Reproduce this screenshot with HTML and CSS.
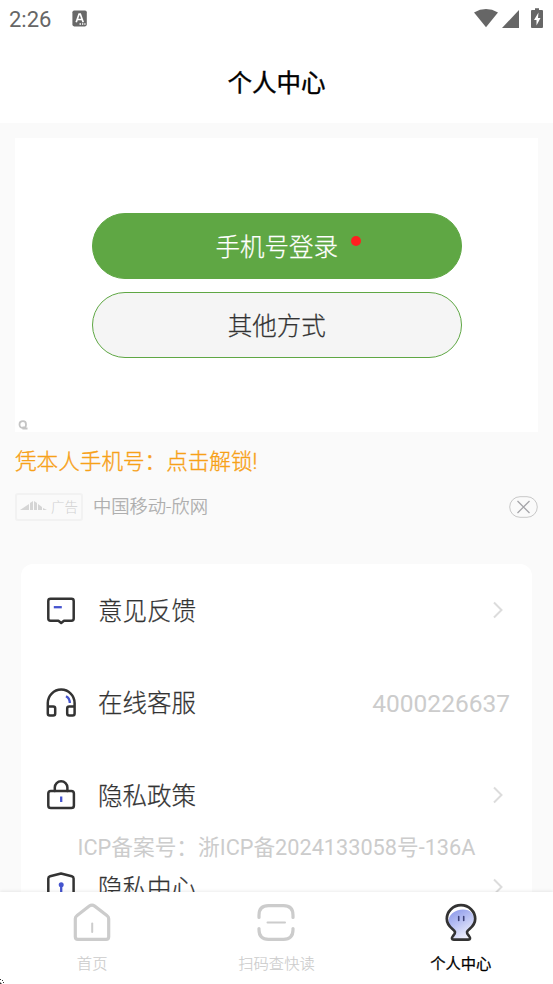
FILE: index.html
```html
<!DOCTYPE html>
<html lang="zh-CN">
<head>
<meta charset="UTF-8">
<meta name="viewport" content="width=device-width, initial-scale=1">
<title>个人中心</title>
<link rel="stylesheet" href="styles.css">
</head>
<body>
<div class="app">
  <header class="top">
    <div class="status">
      <span class="time">2:26</span>
      <svg class="badge" width="16" height="17" viewBox="0 0 16 17"><rect x=".4" y=".4" width="14.4" height="16" rx="1.8" fill="#686868"/><path d="M4.2 12.2 7.1 4h1.2l2.9 8.2M5.3 9.5H10" fill="none" stroke="#fff" stroke-width="1.7"/><path d="M7.5 14h1.5m1 0h1.3m1 0h1.2" stroke="#fff" stroke-width="1.3"/></svg>
      <svg class="signals" width="71" height="21" viewBox="0 0 71 21"><g fill="#666"><path d="M0 4.5Q12 -2.3 24 4.5L12 19.2Z"/><path d="M45 2v18H28z"/><path d="M61 2V.3h4V2h3q1 0 1 1v16q0 1-1 1H58q-1 0-1-1V3q0-1 1-1z"/></g><path d="M64.5 4.5 60 12h2.5v5.5l4-7.5H64z" fill="#fff"/></svg>
    </div>
    <h1>个人中心</h1>
  </header>
  <main>
    <section class="promo">
      <div class="banner">
        <div class="pill primary">手机号登录<i class="dot"></i></div>
        <div class="pill secondary">其他方式</div>
        <svg class="mark" width="10" height="10" viewBox="0 0 10 10"><path d="M5 1.2c2 0 3 1.200 3 3.300S7 8 5 8 1.500 6.800 1.500 4.500 3 1.200 5 1.200zM5.300 6.500v2H9.500" fill="none" stroke="#c4c4c4" stroke-width="1.800"/></svg>
      </div>
      <p class="caption">凭本人手机号：点击解锁!</p>
      <div class="source">
        <span class="ad"><svg width="27" height="10" viewBox="0 0 27 10"><path d="M0 9 9 3v6zM10 9V2l3-2v9zM14 9V0l3 2v7zM18 9V3l4 3v3zM23 9V7l4 2z" fill="#d5d5d5"/></svg>广告</span>
        <span class="advertiser">中国移动-欣网</span>
        <svg class="close" width="29" height="22" viewBox="0 0 29 22"><rect x=".7" y=".7" width="27.600" height="20.600" rx="10.300" fill="none" stroke="#c8c8c8"/><path d="m8.500 5 12 12m0-12-12 12" stroke="#a5a5a9" stroke-width="1.300"/></svg>
      </div>
    </section>
    <section class="menu">
      <div class="row">
        <svg class="icon" width="32" height="32" viewBox="0 0 32 32"><path d="M5.500 3.800h21q2.200 0 2.200 2.200v17.500q0 2.200-2.200 2.200H19l-2.800 2.200-2.800-2.200H5.500q-2.200 0-2.200-2.200V6q0-2.200 2.200-2.200z" class="ink"/><path d="M8.800 12.200h8" class="accent"/></svg>
        <span class="label">意见反馈</span>
        <svg class="arrow" width="12" height="18" viewBox="0 0 12 18"><path d="m2 1.500 7.500 7.500L2 16.500"/></svg>
      </div>
      <div class="row">
        <svg class="icon" width="32" height="32" viewBox="0 0 32 32"><path d="M2.800 20v-4a13.400 13.400 0 0 1 26.800 0v4M2.800 19.500v7q0 2 2 2h3.400q2 0 2-2v-5q0-2-2-2zM29.600 19.500v7q0 2-2 2h-3.400q-2 0-2-2v-5q0-2 2-2z" class="ink"/><path d="M21 9.200q3.800 2 3.800 6.800" class="accent"/></svg>
        <span class="label">在线客服</span>
        <span class="phone">4000226637</span>
      </div>
      <div class="row">
        <svg class="icon" width="32" height="32" viewBox="0 0 32 32"><rect x="3.300" y="12" width="25.600" height="17" rx="2.600" class="ink"/><path d="M9.800 12V8.500a6.300 6.300 0 0 1 12.600 0V12" class="ink"/><path d="M16.200 17.500v5.500" class="accent"/></svg>
        <span class="label">隐私政策</span>
        <svg class="arrow" width="12" height="18" viewBox="0 0 12 18"><path d="m2 1.500 7.500 7.500L2 16.500"/></svg>
      </div>
      <div class="row">
        <svg class="icon" width="32" height="32" viewBox="0 0 32 32"><path d="m16 1.500 10.800 2.700q1.800.5 1.800 2.300V20q0 7-12.600 10Q3.300 27 3.300 20V6.500q0-1.800 1.800-2.300z" class="ink"/><circle cx="16.200" cy="12.800" r="2.500" fill="#4554ce"/><path d="M16.200 13v7" class="accent"/></svg>
        <span class="label">隐私中心</span>
        <svg class="arrow" width="12" height="18" viewBox="0 0 12 18"><path d="m2 1.500 7.500 7.500L2 16.500"/></svg>
      </div>
    </section>
    <p class="record">ICP备案号：浙ICP备2024133058号-136A</p>
  </main>
  <nav class="tabs">
    <div class="tab">
      <svg width="40" height="40" viewBox="0 0 40 40"><path d="M3.300 16.800q0-2 1.500-3.100L17.300 4.100q2.700-2 5.400 0l12.500 9.600q1.500 1.100 1.500 3.100v18q0 2.600-2.600 2.600H5.900q-2.600 0-2.600-2.600z" class="line"/><path d="M20.200 21.500V30" class="thin"/></svg>
      <span>首页</span>
    </div>
    <div class="tab">
      <svg width="40" height="40" viewBox="0 0 40 40"><path d="M3 15.500v-2.300q0-9.500 9.500-9.500h15q9.500 0 9.500 9.500v2.300M3 26.500v1.300q0 9.500 9.500 9.500h15q9.500 0 9.500-9.500v-1.300" class="line"/><path d="M11.500 20.500h17.500" class="thin"/></svg>
      <span>扫码查快读</span>
    </div>
    <div class="tab active">
      <svg width="40" height="40" viewBox="0 0 40 40"><defs><linearGradient id="face" x1="0" y1="0" x2=".5" y2="1"><stop offset=".15" stop-color="#94a0ec"/><stop offset="1" stop-color="#eceefc"/></linearGradient></defs><path d="M7.500 21C6.500 13 14 7.500 22 7.500s11 5 11 10c0 6-6 9-7 13v4l2 3H12l2-7c-1-4-6-6-6.500-9.500z" fill="url(#face)"/><path d="M14 30c-.8-3.500-8.200-4.500-8.200-13.200a14.200 13.600 0 0 1 28.400 0C34.200 25.500 26.800 26.500 26 30q-.3 1.600 2 4c1.700 2 1.200 3.600-.8 3.600H12.800c-2 0-2.500-1.600-.8-3.600q2.300-2.400 2-4z" class="figure"/><path d="M17.700 14.500v4m5-4v4" stroke="#3f437b" stroke-width="1.600" stroke-linecap="round"/></svg>
      <span>个人中心</span>
    </div>
    <svg class="pointer" width="5" height="5" viewBox="0 0 5 5"><path d="M0 0h1v1H0zM2 1h1v1H2zM3 3h1v1H3zM0 3l2 2H0z" fill="#333"/></svg>
  </nav>
</div>
</body>
</html>
```

FILE: styles.css
```css
* { box-sizing: border-box; }
body { margin: 0; background: #fafafa; font-family: Roboto, "Noto Sans CJK SC", sans-serif; }
h1, p { margin: 0; }
svg { display: block; flex: none; }
.app { width: 553px; height: 984px; display: flex; flex-direction: column; overflow: hidden; }
.top { height: 123px; background: #fff; flex: none; }
.status { height: 38px; display: flex; align-items: center; padding: 0 8px 0 9px; }
.time { font-size: 22px; line-height: 38px; color: #666; width: 63px; padding-top: 1px; }
.badge { margin-top: -1px; }
.signals { margin-left: auto; margin-top: -2px; }
h1 { font-size: 24.500px; line-height: 36px; font-weight: 400; -webkit-text-stroke: .4px #000; text-align: center; color: #000; margin-top: 28px; }
main { position: relative; flex: 1; min-height: 0; overflow: hidden; padding-top: 15px; }
.promo { height: 426px; padding: 0 15px; }
.banner { position: relative; height: 294px; background: #fff; padding: 74.500px 76px 0 76.500px; display: flex; flex-direction: column; gap: 13.500px; }
.pill { position: relative; height: 66px; border: 1px solid #5fa744; border-radius: 33px; font-size: 24.500px; line-height: 67px; text-align: center; font-weight: 300; -webkit-text-stroke: .25px currentColor; }
.primary { background: #5fa744; color: #fff; }
.secondary { background: #f5f5f5; color: #333; }
.dot { position: absolute; left: 258.500px; top: 22.500px; width: 10px; height: 10px; border-radius: 50%; background: #ff2020; }
.mark { position: absolute; left: 3px; bottom: 2px; }
.caption { font-size: 21.600px; line-height: 30px; color: #f7a118; margin-top: 15px; font-weight: 300; -webkit-text-stroke: .35px currentColor; }
.source { display: flex; align-items: center; height: 28px; margin-top: 16px; }
.ad { width: 68px; height: 28px; border: 2px solid #f2f2f2; border-radius: 3px; display: flex; align-items: center; gap: 4px; padding: 0 0 2px 3px; font-size: 13.500px; color: #d0d0d0; font-weight: 300; white-space: nowrap; }
.advertiser { margin-left: 10px; font-size: 18.300px; color: #aaa; line-height: 28px; font-weight: 300; -webkit-text-stroke: .25px currentColor; }
.close { margin-left: auto; }
.menu { margin: 0 21px; background: #fff; border-radius: 12px; }
.row { height: 92.300px; display: flex; align-items: center; padding: 0 22px 0 24px; color: #333; }
.icon { margin-top: 1.500px; }
.label { margin: 4px 0 0 21px; font-size: 24.500px; line-height: 36px; font-weight: 300; -webkit-text-stroke: .25px currentColor; }
.ink { fill: none; stroke: #333; stroke-width: 2.500; stroke-linejoin: round; stroke-linecap: round; }
.accent { fill: none; stroke: #4554ce; stroke-width: 2.300; }
.arrow { margin-left: auto; margin-right: 6px; fill: none; stroke: #dcdcdc; stroke-width: 2; }
.phone { margin-left: auto; font-size: 24.500px; color: #ccc; padding-top: 2px; }
.record { position: absolute; left: 0; right: 0; bottom: 28px; text-align: center; font-size: 21.700px; line-height: 32px; color: #ccc; white-space: nowrap; }
.tabs { position: relative; height: 92px; flex: none; display: flex; background: #fff; box-shadow: 0 -1px 3px rgba(0,0,0,.08); }
.tab { flex: 1; display: flex; flex-direction: column; align-items: center; padding-top: 10px; font-size: 15.300px; line-height: 22px; color: #ccc; font-weight: 300; -webkit-text-stroke: .15px currentColor; }
.tab span { margin-top: 11px; }
.active { color: #000; font-weight: 400; -webkit-text-stroke: .25px #000; }
.line { fill: none; stroke: #ccc; stroke-width: 3.200; stroke-linecap: round; }
.thin { fill: none; stroke: #ccc; stroke-width: 2; stroke-linecap: round; }
.figure { fill: none; stroke: #333; stroke-width: 2.700; stroke-linejoin: round; }
.pointer { position: absolute; left: 0; bottom: 0; }
```
